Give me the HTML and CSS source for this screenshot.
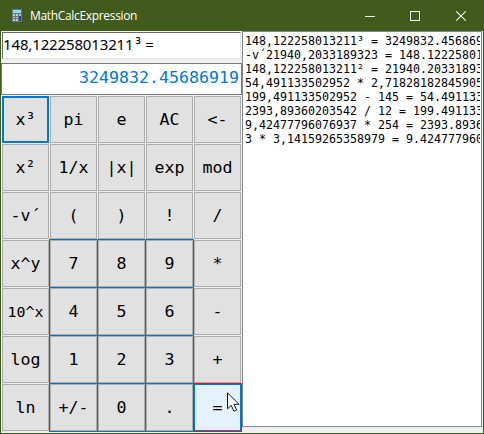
FILE: index.html
```html
<!DOCTYPE html>
<html lang="en">
<head>
<meta charset="utf-8">
<title>MathCalcExpression</title>
<link rel="stylesheet" href="styles.css">
</head>
<body>
<div class="window">
  <header class="titlebar">
    <svg class="app-icon" width="10" height="13" viewBox="0 0 10 13">
      <rect width="10" height="13" fill="#667780"/>
      <rect x="1" y="1" width="8" height="3" fill="#86dcf5"/>
      <path d="M1 5h2v2H1zM4 5h2v2H4zM1 8h2v1H1zM4 8h2v1H4zM1 10h2v2H1zM4 10h2v2H4z" fill="#c5cbd0"/>
      <path d="M7 5h2v2H7z" fill="#a6bfd0"/>
      <path d="M7 7h2v5H7z" fill="#174e86"/>
    </svg>
    <span class="title">MathCalcExpression</span>
    <svg class="controls" width="102" height="12" viewBox="0 0 102 12" fill="none" stroke="#fff">
      <path d="M0 6.5h10"/>
      <rect x="45.5" y="1.5" width="9" height="9"/>
      <path d="M91.300 1.300l9.400 9.400M100.700 1.300l-9.400 9.400" stroke-width="1.1"/>
    </svg>
  </header>
  <main class="content">
    <section class="calculator">
      <div class="expression">148,122258013211<span class="power">³</span> =</div>
      <div class="result">3249832.45686919</div>
      <div class="keys">
        <button class="focused">x³</button><button>pi</button><button>e</button><button>AC</button><button>&lt;-</button>
        <button>x²</button><button>1/x</button><button>|x|</button><button>exp</button><button>mod</button>
        <button>-v´</button><button>(</button><button>)</button><button>!</button><button>/</button>
        <button>x^y</button><button class="num">7</button><button class="num">8</button><button class="num">9</button><button>*</button>
        <button class="small">10^x</button><button class="num">4</button><button class="num">5</button><button class="num">6</button><button>-</button>
        <button>log</button><button class="num">1</button><button class="num">2</button><button class="num">3</button><button>+</button>
        <button>ln</button><button class="num">+/-</button><button class="num">0</button><button class="num">.</button><button class="equals">=</button>
      </div>
    </section>
    <section class="history">
      <div>148,122258013211³ = 3249832.45686919</div>
      <div>-v´21940,2033189323 = 148.122258013211</div>
      <div>148,122258013211² = 21940.2033189323</div>
      <div>54,491133502952 * 2,71828182845905 = 148.122258013211</div>
      <div>199,491133502952 - 145 = 54.491133502952</div>
      <div>2393,89360203542 / 12 = 199.491133502952</div>
      <div>9,42477796076937 * 254 = 2393.89360203542</div>
      <div>3 * 3,14159265358979 = 9.42477796076937</div>
    </section>
  </main>
  <svg class="cursor" width="14" height="21" viewBox="0 0 14 21">
    <path d="M.5 .8v16l3.700-3.500 2.700 5.900 2.700-1.200-2.600-5.700h5z" fill="#fff" stroke="#15152a"/>
  </svg>
</div>
</body>
</html>
```
FILE: styles.css
```css
* { box-sizing: border-box; }
body { margin: 0; }
.window {
  position: relative;
  width: 484px;
  height: 434px;
  overflow: hidden;
  background: #405b1c;
  font-family: "DejaVu Sans Mono", monospace;
  color: #000;
}
.titlebar {
  display: flex;
  align-items: center;
  height: 31px;
  padding: 0 18px 0 12px;
  color: #fff;
}
.title {
  flex: 1;
  margin-left: 8px;
  font: 12px/31px "Open Sans", "Noto Sans", sans-serif;
  letter-spacing: -.33px;
}
.controls { margin-right: -1px; }
.content {
  display: flex;
  height: 402px;
  margin: 0 1px;
  background: #f0f0f0;
}
.calculator { width: 241px; }
.expression {
  width: 239px;
  height: 27px;
  margin: 1px 0 0 1px;
  border: 1px solid #e3e3e3;
  border-top-color: #696969;
  border-left-color: #696969;
  background: #fff;
  font: 15px/22px "Noto Sans", sans-serif;
  letter-spacing: -.14px;
  white-space: pre;
}
.power { margin: 0 1px 0 2px; }
.result {
  height: 32px;
  margin-top: 4px;
  padding-right: 2px;
  border: 1px solid #7a7a7a;
  background: #fff;
  color: #0078d7;
  font-size: 16.61px;
  line-height: 28px;
  text-align: right;
}
.keys {
  display: grid;
  grid-template-columns: repeat(5, 47px);
  grid-auto-rows: 47px;
  gap: 1px;
  margin: 1px 0 0 1px;
}
.keys button {
  padding: 1px 0 0;
  border: 1px solid #adadad;
  border-radius: 0;
  background: #e1e1e1;
  color: #000;
  font: 16.61px/20px "DejaVu Sans Mono", monospace;
}
.keys .small { font-size: 14.9px; }
.keys .focused { border: 2px solid #0078d7; }
.keys .num { box-shadow: 0 0 0 1px #0078c8; }
.keys .equals {
  position: relative;
  border-color: #0078d7;
  background: #e5f1fb;
  box-shadow: 0 0 0 1px #e81123;
}
.history {
  width: 240px;
  height: 396px;
  padding: 2px 0 0 2px;
  border: 1px solid #828790;
  background: #fff;
  font-size: 11.63px;
  line-height: 14px;
  overflow: hidden;
}
.history div {
  width: 235px;
  height: 14px;
  overflow: hidden;
  white-space: pre;
}
.cursor { position: absolute; left: 227px; top: 392px; }
```
